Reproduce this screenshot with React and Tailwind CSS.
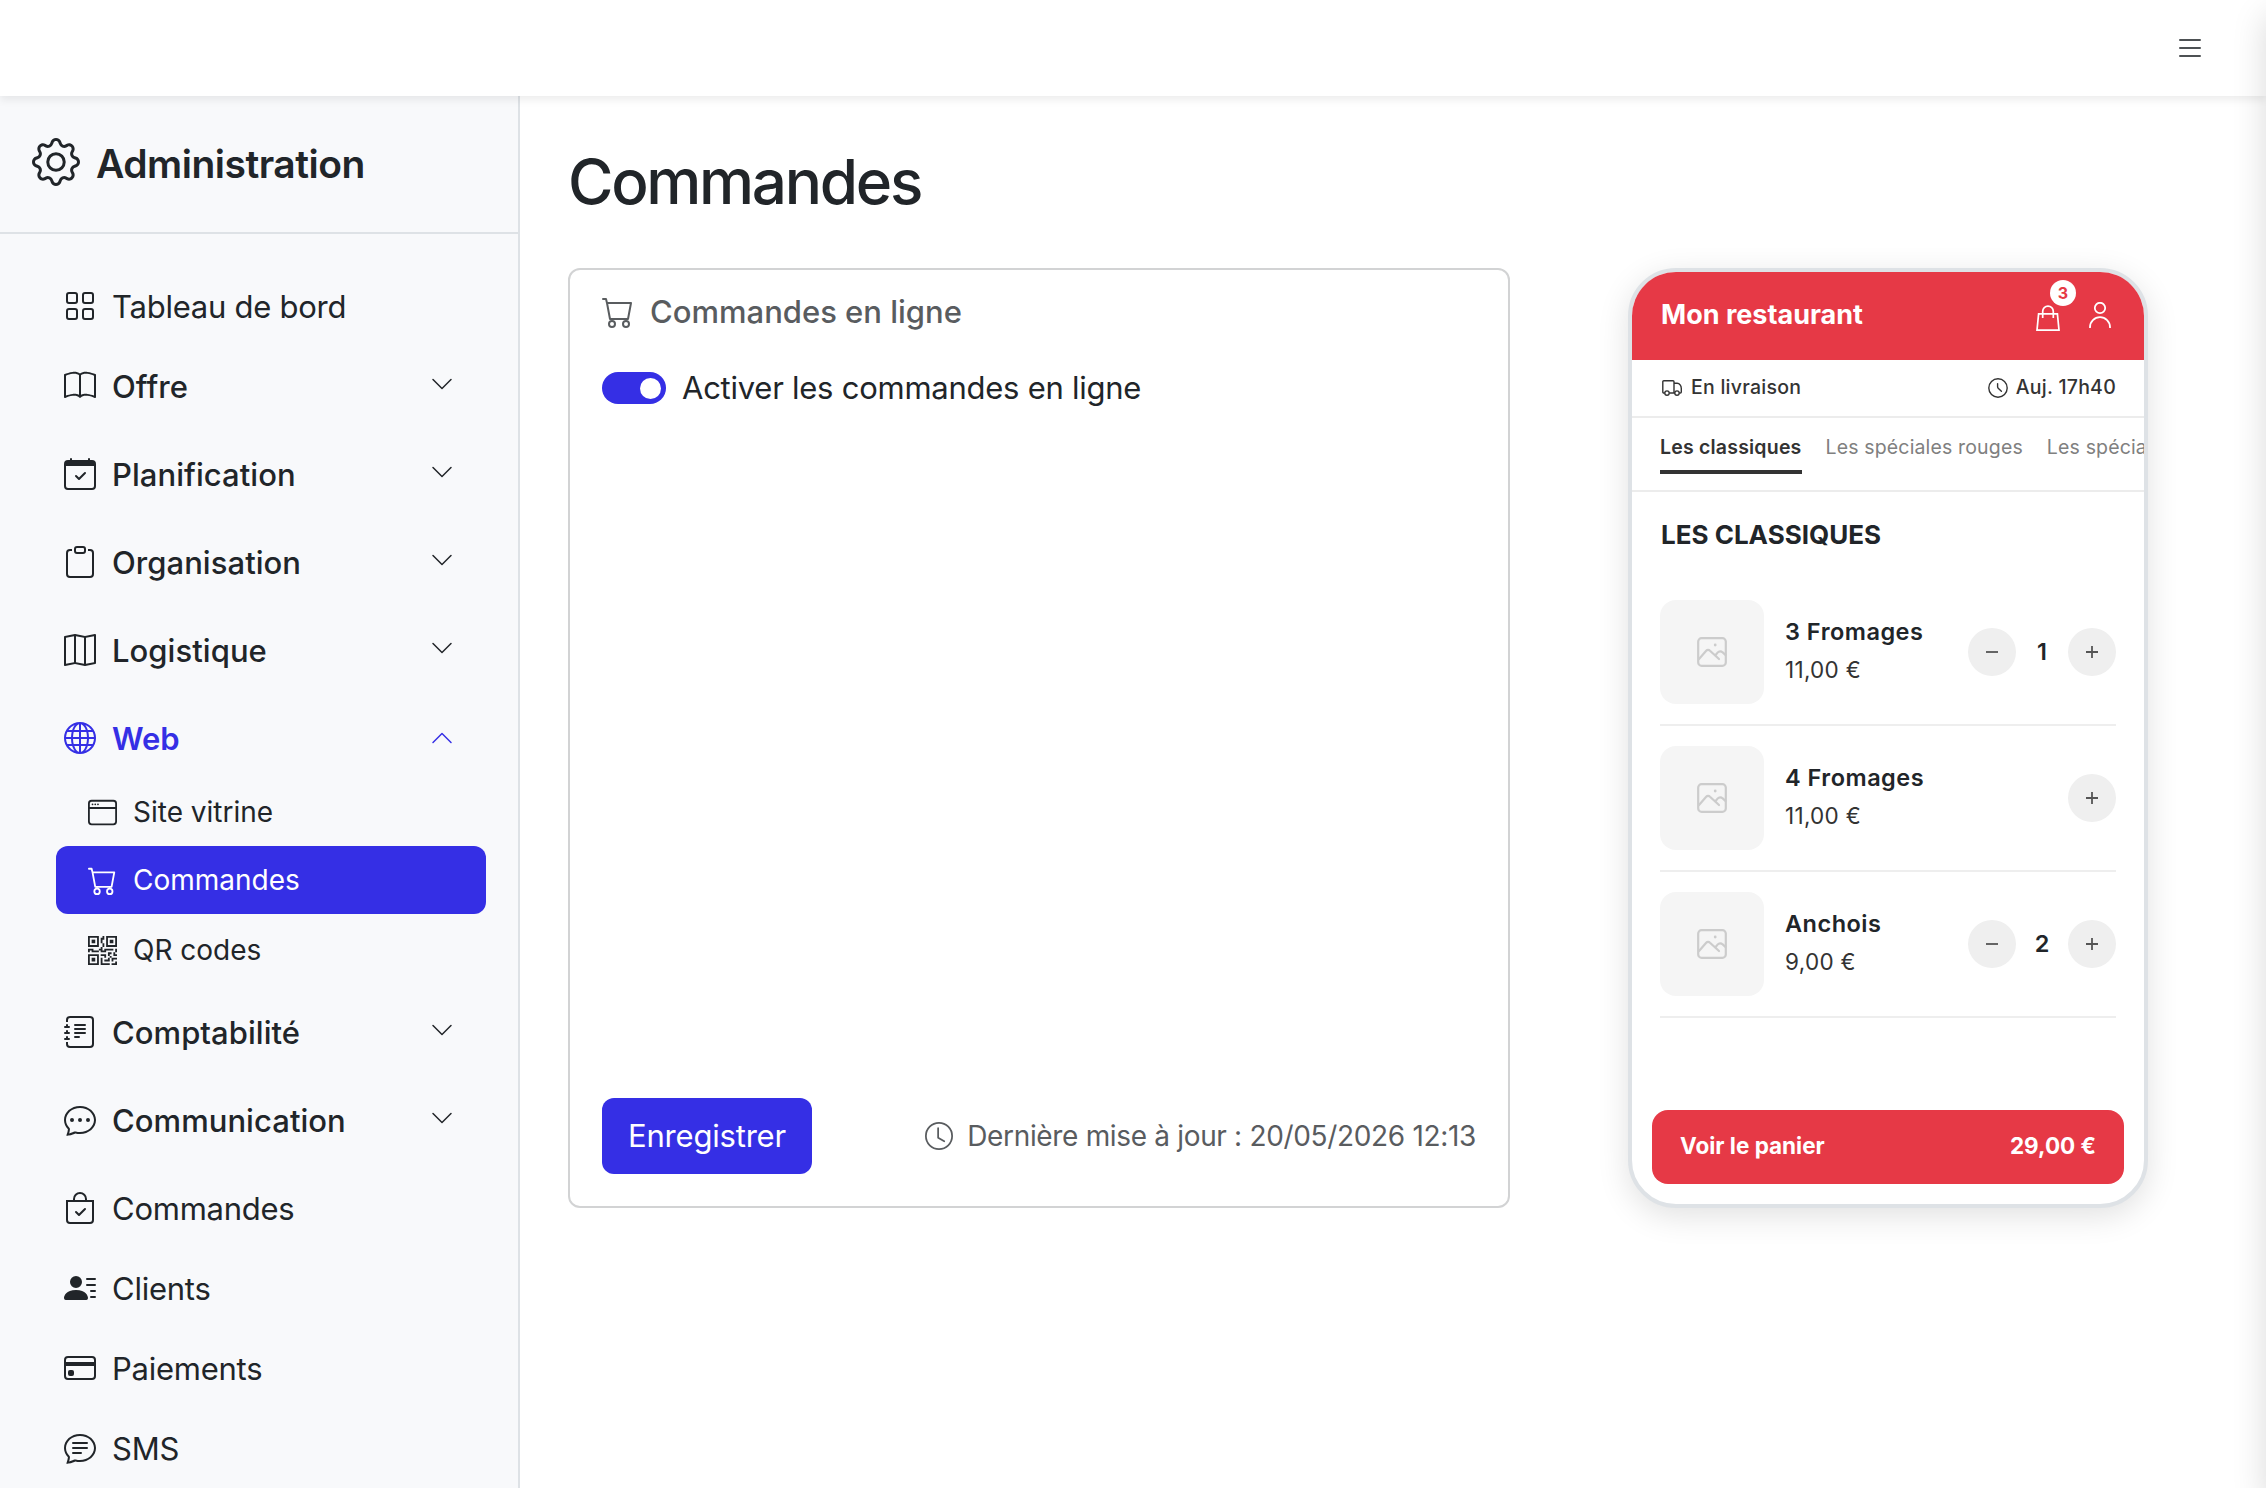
import React from "react";
import {
  BsGear,
  BsGrid,
  BsBook,
  BsCalendarCheck,
  BsClipboard,
  BsMap,
  BsGlobe,
  BsWindow,
  BsCart,
  BsQrCode,
  BsJournalText,
  BsChatDots,
  BsBagCheck,
  BsPersonLinesFill,
  BsCreditCard,
  BsChatText,
  BsChevronDown,
  BsChevronUp,
  BsClock,
  BsList,
} from "react-icons/bs";

const groups = [
  { label: "Offre", icon: BsBook },
  { label: "Planification", icon: BsCalendarCheck },
  { label: "Organisation", icon: BsClipboard },
  { label: "Logistique", icon: BsMap },
  {
    label: "Web",
    icon: BsGlobe,
    children: [
      { label: "Site vitrine", icon: BsWindow },
      { label: "Commandes", icon: BsCart, active: true },
      { label: "QR codes", icon: BsQrCode },
    ],
  },
  { label: "Comptabilité", icon: BsJournalText },
  { label: "Communication", icon: BsChatDots },
];

const links = [
  { label: "Commandes", icon: BsBagCheck },
  { label: "Clients", icon: BsPersonLinesFill },
  { label: "Paiements", icon: BsCreditCard },
  { label: "SMS", icon: BsChatText },
];

const products = [
  { name: "3 Fromages", price: "11,00 €", qty: 1 },
  { name: "4 Fromages", price: "11,00 €", qty: 0 },
  { name: "Anchois", price: "9,00 €", qty: 2 },
];

function BagIcon() {
  return (
    <svg viewBox="0 0 24 26" className="h-[26px] w-6" fill="none" stroke="currentColor" strokeWidth="1.7">
      <path d="M2.6 8.8H21.4L23 25.1H1Z" />
      <path d="M6.7 13V6.4a5.3 5.3 0 0 1 10.6 0V13" />
    </svg>
  );
}

function UserIcon() {
  return (
    <svg viewBox="0 0 22 26" className="h-[26px] w-[22px]" fill="none" stroke="currentColor" strokeWidth="1.8">
      <circle cx="11" cy="6" r="5.2" />
      <path d="M1 26v-1a10 9.8 0 0 1 20 0v1" />
    </svg>
  );
}

function TruckIcon() {
  return (
    <svg viewBox="0 0 20 16" className="h-4 w-5" fill="none" stroke="currentColor" strokeWidth="1.4">
      <path d="M2.7 13h-.9a1 1 0 0 1-1-1V1.8a1 1 0 0 1 1-1H11a1 1 0 0 1 1 1V13H7.3" />
      <path d="M12 3.2h3.2c2.4 0 4.1 2.8 4.1 5.2V12a1 1 0 0 1-1 1h-1M12 13h.7" />
      <circle cx="5" cy="13.1" r="2.2" />
      <circle cx="15" cy="13.1" r="2.2" />
    </svg>
  );
}

function TimeIcon() {
  return (
    <svg viewBox="0 0 20 20" className="size-5" fill="none" stroke="currentColor" strokeWidth="1.4">
      <circle cx="10" cy="10" r="9.2" />
      <path d="M9.6 5.6v3.2a2 2 0 0 0 .6 1.4l3.2 3.1" strokeLinecap="round" />
    </svg>
  );
}

function ImageIcon() {
  return (
    <svg
      viewBox="0 0 30 30"
      className="size-[30px]"
      fill="none"
      stroke="currentColor"
      strokeWidth="2.2"
      strokeLinecap="round"
    >
      <rect x="1.2" y="1.2" width="27.6" height="27.6" rx="3.4" />
      <path d="M2 22l7.2-8.2a2.6 2.6 0 0 1 3.8-.1l9 8.3" />
      <path d="M18.4 18.2l2.4-2.8a3.2 3.2 0 0 1 4.6-.2l3 2.6" />
      <circle cx="18.2" cy="8" r="1.4" fill="currentColor" stroke="none" />
    </svg>
  );
}

function NavLink({ label, icon: Icon }) {
  return (
    <a className="flex h-[72px] items-center gap-4 px-2">
      <Icon className="size-8" />
      <span className="pt-px text-[31px] leading-[48px] tracking-[-0.25px]">{label}</span>
    </a>
  );
}

function SubLink({ label, icon: Icon, active }) {
  return (
    <a
      className={
        active
          ? "flex h-[68px] items-center gap-4 rounded-xl bg-[#352fe5] pl-8 text-white"
          : "flex h-[68px] items-center gap-4 pl-8"
      }
    >
      <Icon className="size-[29px]" />
      <span className="text-[28px] leading-[42px]">{label}</span>
    </a>
  );
}

function NavGroup({ label, icon: Icon, children }) {
  if (children) {
    return (
      <div>
        <button className="flex h-[88px] w-full items-center gap-4 px-2 text-left text-[#352fe5]">
          <Icon className="size-8" />
          <span className="flex-1 pt-px text-[31px] leading-[48px] font-semibold tracking-[-0.1px]">
            {label}
          </span>
          <BsChevronUp className="mr-6 size-6" />
        </button>
        <div className="-mt-1 pb-1">
          {children.map((c) => (
            <div key={c.label} className="last:pt-0.5">
              <SubLink {...c} />
            </div>
          ))}
        </div>
      </div>
    );
  }

  return (
    <button className="flex h-[88px] w-full items-center gap-4 px-2 text-left">
      <Icon className="size-8" />
      <span className="flex-1 pt-px text-[31px] leading-[48px] font-medium tracking-[0.05px]">
        {label}
      </span>
      <BsChevronDown className="mr-6 mb-1 size-6" />
    </button>
  );
}

function RoundButton({ children }) {
  return (
    <button className="flex size-12 items-center justify-center rounded-full bg-[#efefef] text-[#555]">
      <svg viewBox="0 0 12 12" className="size-3" stroke="currentColor" strokeWidth="1.8">
        {children}
      </svg>
    </button>
  );
}

function Product({ name, price, qty }) {
  return (
    <div className="flex items-center border-b-2 border-[#eeeeee] py-5">
      <div className="flex size-[104px] items-center justify-center rounded-2xl bg-[#f5f5f5] text-[#cccccc]">
        <ImageIcon />
      </div>
      <div className="-mt-0.5 ml-[21px] flex-1">
        <div className="text-[23.5px] leading-[38px] font-semibold tracking-[0.5px]">{name}</div>
        <div className="text-[22.5px] leading-[38px] tracking-[0.3px] text-[#333333]">{price}</div>
      </div>
      {qty > 0 && (
        <>
          <RoundButton>
            <path d="M0 6h12" />
          </RoundButton>
          <span className="w-[52px] text-center text-[23.5px] font-semibold">{qty}</span>
        </>
      )}
      <RoundButton>
        <path d="M0 6h12M6 0v12" />
      </RoundButton>
    </div>
  );
}

function PhonePreview() {
  return (
    <div className="flex h-[940px] w-[520px] flex-col overflow-hidden rounded-[48px] border-4 border-[#dee2e6] bg-white shadow-[0_8px_32px_rgba(0,0,0,0.12)]">
      {/* Restaurant header */}
      <div className="flex h-[88px] shrink-0 items-center bg-[#e63946] px-7 text-white">
        <span className="mb-0.5 flex-1 pl-px text-[27px] font-bold">Mon restaurant</span>
        <div className="relative mt-1 mr-[29px]">
          <BagIcon />
          <span className="absolute -top-[25px] left-3.5 flex size-[26px] items-center justify-center rounded-full bg-white text-[16px] font-bold text-[#e63946]">
            3
          </span>
        </div>
        <div className="mr-[5px] mb-0.5">
          <UserIcon />
        </div>
      </div>

      {/* Delivery info */}
      <div className="flex h-[58px] shrink-0 items-center justify-between border-b-2 border-[#ececec] px-7 text-[19.5px] font-medium tracking-[0.25px] text-[#333333]">
        <div className="flex items-center gap-[9px] pl-0.5">
          <TruckIcon />
          <span className="-mt-px">En livraison</span>
        </div>
        <div className="flex items-center gap-2">
          <TimeIcon />
          <span className="-mt-px">Auj. 17h40</span>
        </div>
      </div>

      {/* Category tabs */}
      <div className="flex shrink-0 gap-6 overflow-hidden border-b-2 border-[#ececec] pb-4 pl-7 text-[19.5px] leading-6 tracking-[0.15px] whitespace-nowrap text-[#808080]">
        <div className="border-b-4 border-[#333333] pt-[17px] pb-[11px] font-semibold tracking-[0.2px] text-[#333333]">
          Les classiques
        </div>
        <div className="pt-[17px]">Les spéciales rouges</div>
        <div className="pt-[17px]">Les spéciales</div>
      </div>

      {/* Products */}
      <div className="px-7 pt-6">
        <h2 className="mb-[26px] pl-px text-[26px] leading-[38px] font-bold">LES CLASSIQUES</h2>
        {products.map((p) => (
          <Product key={p.name} {...p} />
        ))}
      </div>

      <div className="mx-5 mt-auto mb-5 flex h-[74px] shrink-0 items-center justify-between rounded-2xl bg-[#e63946] px-7 pb-0.5 text-[22.5px] font-bold text-white">
        <span>Voir le panier</span>
        <span>29,00 €</span>
      </div>
    </div>
  );
}

export default function App() {
  return (
    <div className="relative flex h-[1488px] flex-col overflow-hidden bg-white font-['Inter',sans-serif] text-[#212529]">
      {/* Top bar */}
      <header className="relative z-10 flex h-24 shrink-0 items-center justify-end bg-white pr-[60px] shadow-[0_4px_8px_rgba(0,0,0,0.075)]">
        <BsList className="size-8 text-[#4d5154]" />
      </header>

      <div className="flex min-h-0 flex-1">
        {/* Sidebar */}
        <aside className="w-[520px] shrink-0 overflow-hidden border-r-2 border-[#dee2e6] bg-[#f8f9fb]">
          <div className="flex h-[138px] items-center gap-4 border-b-2 border-[#dee2e6] px-8">
            <BsGear className="mb-1 size-12" />
            <span className="text-[39px] font-semibold tracking-[-0.5px]">Administration</span>
          </div>
          <nav className="pt-9 pr-8 pl-14">
            <NavLink label="Tableau de bord" icon={BsGrid} />
            {groups.map((g) => (
              <NavGroup key={g.label} {...g} />
            ))}
            <div className="mt-2 flex flex-col gap-2">
              {links.map((l) => (
                <NavLink key={l.label} {...l} />
              ))}
            </div>
          </nav>
        </aside>

        {/* Content */}
        <main className="flex-1 px-12 pt-12">
          <h1 className="mb-12 text-[62px] leading-[76px] font-medium tracking-[-2.3px]">
            Commandes
          </h1>
          <div className="flex gap-[118px]">
            <div className="flex h-[940px] w-[942px] flex-col rounded-xl border-2 border-[#d2d3d4] px-8 pt-[18px] pb-8">
              <div className="flex h-12 items-center gap-4 text-[#595c5f]">
                <BsCart className="size-8" />
                <h2 className="pt-px text-[31px] font-medium">Commandes en ligne</h2>
              </div>
              <div className="mt-7 flex h-12 items-center gap-4">
                <span className="flex h-8 w-16 items-center justify-end rounded-full bg-[#352fe5] pr-[5.5px]">
                  <span className="size-[21px] rounded-full bg-white" />
                </span>
                <span className="pt-px text-[31px] tracking-[-0.25px]">
                  Activer les commandes en ligne
                </span>
              </div>
              <div className="mt-auto flex items-center justify-between">
                <button className="h-[76px] w-[210px] rounded-xl bg-[#352fe5] pt-px text-[31px] tracking-[-0.2px] text-white">
                  Enregistrer
                </button>
                <div className="flex items-center gap-3.5 text-[#595c5f]">
                  <BsClock className="size-7" />
                  <span className="text-[28px] tracking-[-0.33px]">
                    Dernière mise à jour : 20/05/2026 12:13
                  </span>
                </div>
              </div>
            </div>
            <PhonePreview />
          </div>
        </main>
      </div>

      {/* Closed side panel, only its shadow reaches the page */}
      <div className="absolute top-0 left-full z-20 h-full w-[800px] bg-white shadow-[0_16px_32px_rgba(0,0,0,0.15)]" />
    </div>
  );
}
